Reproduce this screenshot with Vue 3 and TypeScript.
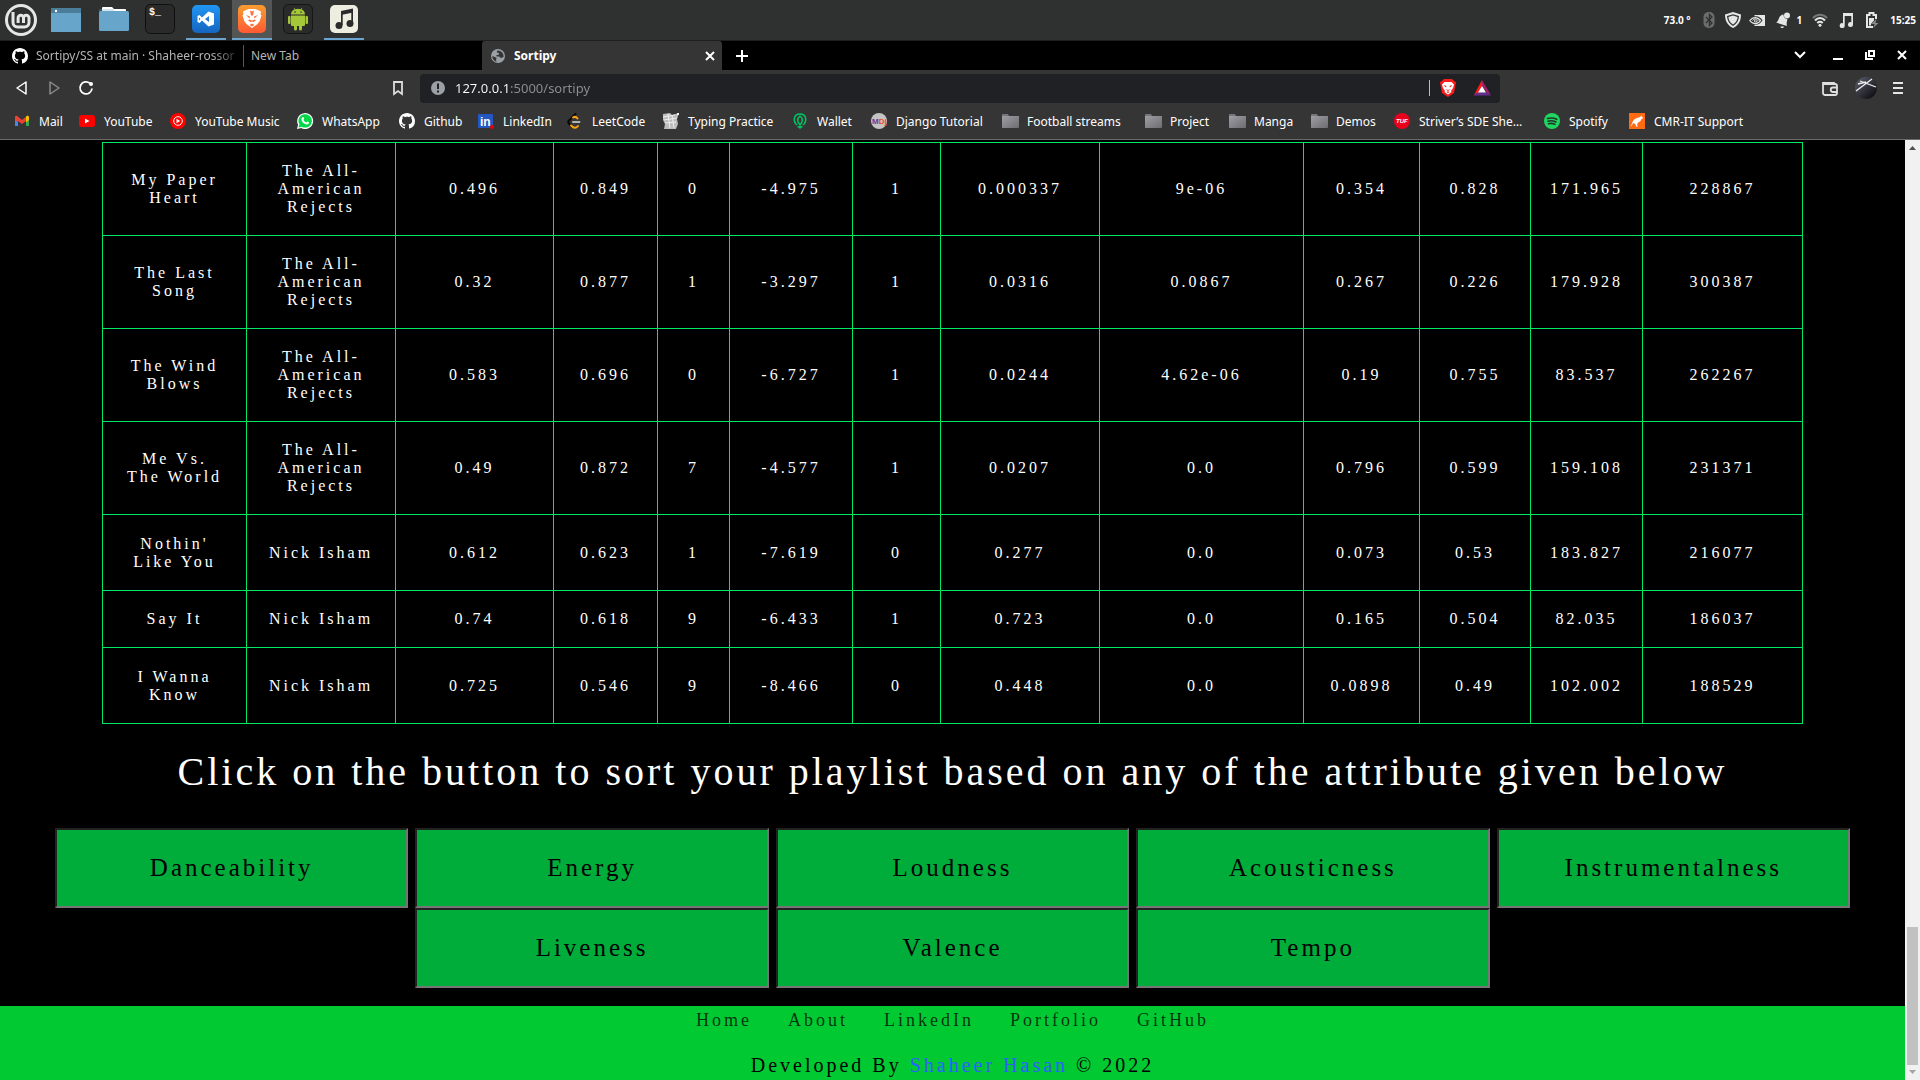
<script setup lang="ts">
import { ref } from 'vue'

interface Launcher {
  name: string
  icon: string
  running?: boolean
  active?: boolean
}

interface Bookmark {
  label: string
  icon: string
  width: number
}

const githubMark =
  '<path fill="#fff" d="M8 0C3.58 0 0 3.58 0 8c0 3.54 2.29 6.53 5.47 7.59.4.07.55-.17.55-.38 0-.19-.01-.82-.01-1.49-2.01.37-2.53-.49-2.69-.94-.09-.23-.48-.94-.82-1.13-.28-.15-.68-.52-.01-.53.63-.01 1.08.58 1.23.82.72 1.21 1.87.87 2.33.66.07-.52.28-.87.51-1.07-1.78-.2-3.64-.89-3.64-3.95 0-.87.31-1.59.82-2.15-.08-.2-.36-1.02.08-2.12 0 0 .67-.21 2.2.82.64-.18 1.32-.27 2-.27.68 0 1.36.09 2 .27 1.53-1.04 2.2-.82 2.2-.82.44 1.1.16 1.92.08 2.12.51.56.82 1.27.82 2.15 0 3.07-1.87 3.75-3.65 3.95.29.25.54.73.54 1.48 0 1.07-.01 1.93-.01 2.2 0 .21.15.46.55.38A8.013 8.013 0 0016 8c0-4.42-3.58-8-8-8z"/>'

const folderMark =
  '<path fill="#77757c" d="M0 2a1 1 0 0 1 1-1h5l1 2h9v11a1 1 0 0 1-1 1H1a1 1 0 0 1-1-1z"/><path fill="url(#folder-face)" d="M0 4V3h17v11a1 1 0 0 1-1 1H1a1 1 0 0 1-1-1z"/>'

const places: Launcher[] = [
  {
    name: 'Menu',
    icon: '<circle cx="21" cy="20" r="14.500" fill="none" stroke="#e6e6e6" stroke-width="3"/><path fill="none" stroke="#e6e6e6" stroke-width="3" d="M13 12v10.500a4.500 4.500 0 0 0 4.500 4.500h7a4.500 4.500 0 0 0 4.500-4.500V18a2.700 2.700 0 0 0-5.500 0v5M23.500 18a2.700 2.700 0 0 0-5.400 0v5"/>'
  },
  {
    name: 'Show desktop',
    icon: '<path fill="#68a5cb" d="M5 8h30v24H5z"/><path fill="#4b7c98" d="M5 8h30v5H5z"/><circle cx="10" cy="11" r="1.200" fill="#fff"/>'
  }
]

const launchers: Launcher[] = [
  {
    name: 'Files',
    icon: '<path fill="#fff" d="M8 12V8a1 1 0 0 1 1-1h9l2 2h11a1 1 0 0 1 1 1v3z"/><rect x="5" y="11" width="30" height="20" rx="1.500" fill="#68a5cb"/><path fill="#68a5cb" d="M5 12V9h14l2 2v2z" opacity=".3"/>'
  },
  {
    name: 'Terminal',
    icon: '<rect x="5.500" y="4.500" width="29" height="29" rx="5" fill="#2a2a2a" stroke="#0f0f0f"/><text x="9" y="15" fill="#fff" font-size="10" font-weight="700" font-family="Liberation Mono, monospace">$_</text>'
  },
  {
    name: 'Visual Studio Code',
    running: true,
    icon: '<rect x="6" y="5" width="28" height="28" rx="5" fill="url(#code-bg)"/><path fill="#fff" fill-rule="evenodd" d="M22.500 11.500l5.500 2v11l-5.500 2-6.500-6-2.500 2.500-2-1V16l2-1 2.500 2.500zM23 16l-4 3 4 3zM13 17.500v3l1.500-1.500z"/>'
  },
  {
    name: 'Brave',
    running: true,
    active: true,
    icon: '<rect x="6" y="5" width="28" height="28" rx="5" fill="url(#brave-bg)"/><path fill="#fff" d="M14 10l3-1h6l3 1 3 1.500-.500 2.500 1 1.500-2 6-2.500 3-5 3.500-5-3.500-2.500-3-2-6 1-1.500L11 11.500z"/><path fill="#ff7139" d="M14 15l4 1.500-.500 2zM26 15l-4 1.500.500 2zM16 20.500l1.500-1 2.500 1 2.500-1 1.500 1-2.500 1.500-1.500-.500-1.500.500zM17.500 25l2.500-1.500 2.500 1.500-2.500 1.500zM18 10.500l2 1 2-1-1 5h-2z"/>'
  },
  {
    name: 'Android Studio',
    icon: '<rect x="5.500" y="4.500" width="29" height="29" rx="5" fill="#2a2a2a" stroke="#151515"/><path fill="#a4c639" d="M13 15.500h14V25a1 1 0 0 1-1 1h-2v3a1.500 1.500 0 0 1-3 0v-3h-2v3a1.500 1.500 0 0 1-3 0v-3h-2a1 1 0 0 1-1-1zM13 14.500c0-3 2-4.500 3.600-5l-1-1.500.500-.300 1.200 1.600a8 8 0 0 1 5.400 0l1.200-1.600.500.300-1 1.500c1.600.500 3.600 2 3.600 5z"/><rect x="10" y="16" width="2.500" height="8" rx="1" fill="#a4c639"/><rect x="27.500" y="16" width="2.500" height="8" rx="1" fill="#a4c639"/><circle cx="17" cy="12" r=".8" fill="#2a2a2a"/><circle cx="23" cy="12" r=".8" fill="#2a2a2a"/>'
  },
  {
    name: 'Music',
    running: true,
    icon: '<rect x="6" y="5" width="28" height="28" rx="5" fill="#eeeee0"/><g fill="#2b2b2b"><path d="M17 11l12-2.500v4L17 15z"/><path d="M17 11h1.700v14H17zM27.300 10H29v13h-1.700z"/><circle cx="15" cy="25.500" r="3.500"/><circle cx="26" cy="23.500" r="3.500"/></g>'
  }
]

const systemIcons = [
  { name: 'Bluetooth', icon: '<rect x="2.500" y="0" width="11" height="16" rx="5" fill="#6b6c6b"/><path fill="none" stroke="#2f3130" stroke-width="1.300" d="M5 5l6 6-2.500 2.500v-11L11 5l-6 6"/>' },
  { name: 'Firewall', icon: '<path fill="#e6e6e6" d="M8 0l8 2.500C16 9 13.500 13.500 8 16 2.500 13.500 0 9 0 2.500z"/><path fill="#2f3130" d="M8 2.200l6 1.900c-.200 4.400-2 7.700-6 9.800-4-2.100-5.800-5.400-6-9.800z"/><path fill="#e6e6e6" d="M8 3.600l4.600 1.500c-.200 3.300-1.600 5.700-4.600 7.400-3-1.700-4.400-4.100-4.600-7.400z"/>' },
  { name: 'Graphics', icon: '<path fill="#e6e6e6" d="M5.500 3H16v11H5.500z"/><path fill="#2f3130" d="M5 4.500c4-.8 7 1 8.500 4C11 12 8 13.500 5 12.500z"/><path fill="none" stroke="#e6e6e6" stroke-width="1.200" d="M.8 8.500C4 4.500 8.500 5 11.500 8.500 9 12.500 4 13 .8 8.500z"/><path fill="none" stroke="#e6e6e6" d="M3.500 8.500c1.500-2 4-2 5.500 0-1.500 2-3 2-4 .5 1-1.500 2-1 2.500-.3"/>' }
]

const statusIcons = [
  { name: 'Wi-Fi', icon: '<path fill="none" stroke="#777" stroke-width="2" d="M1 6c4-4.500 10-4.500 14 0"/><path fill="none" stroke="#e6e6e6" stroke-width="2" d="M3 8.500c3-3.300 7-3.300 10 0M5.300 11c1.600-1.600 3.800-1.600 5.400 0"/><circle cx="8" cy="13.300" r="1.500" fill="#e6e6e6"/>' },
  { name: 'Now playing', icon: '<path fill="#e6e6e6" d="M5 1h10v11.500a2.500 2.500 0 1 1-1.700-2.300V4H6.700v9.500A2.500 2.500 0 1 1 5 11.200z"/>' },
  { name: 'Battery', icon: '<path fill="none" stroke="#e6e6e6" stroke-width="2" d="M9 15H3V3h2.500V1h4v2H12v4"/><path fill="#e6e6e6" d="M5 6h5v2.500L7 12v1.500H5z"/><path fill="#8c8c8c" d="M12.500 7L7.500 12h3.300L9 16l5.500-5h-3z"/>' }
]

const bookmarks: Bookmark[] = [
  { label: 'Mail', width: 65, icon: '<path fill="#4285f4" d="M1 4v9h3V7z"/><path fill="#34a853" d="M12 7v6h3V4z"/><path fill="#fbbc04" d="M12 3.500l1.500-1 1.500 1V7l-3 2.500z"/><path fill="#ea4335" d="M1 3.500l1.500-1L8 7l4-3.200V8l-4 3-4-3v1.500L1 7z"/>' },
  { label: 'YouTube', width: 91, icon: '<rect x="0" y="2" width="16" height="12" rx="2.500" fill="#f00"/><path fill="#fff" d="M6 5.500v5L10.500 8z"/>' },
  { label: 'YouTube Music', width: 127, icon: '<circle cx="8" cy="8" r="8" fill="#f00"/><circle cx="8" cy="8" r="4.300" fill="none" stroke="#fff"/><path fill="#fff" d="M6.500 5.800v4.400L10.200 8z"/>' },
  { label: 'WhatsApp', width: 102, icon: '<path fill="#fff" d="M0 16l1.100-4.200A8 8 0 1 1 4.200 15z"/><path fill="#00d84a" d="M1.500 14.500l.900-3.200a6.700 6.700 0 1 1 2.400 2.400z"/><path fill="#fff" d="M5.500 4.200c.6-.4 1 0 1.100.4l.5 1.200c.1.500-.600.900-.600 1.200.7 1.300 1.400 1.900 2.700 2.400.4 0 .7-.9 1.100-.8l1.500.7c.4.300.1 1.300-.4 1.700-1 .8-2.500.500-3.900-.3C5.800 9.700 4.800 8.300 4.500 7c-.2-1.300.3-2.300 1-2.800z"/>' },
  { label: 'Github', width: 79, icon: githubMark },
  { label: 'LinkedIn', width: 89, icon: '<rect x="0" y="1" width="15" height="14" rx="1" fill="#2257c4"/><text x="2" y="13" fill="#fff" font-size="12" font-weight="700" font-family="Liberation Sans, sans-serif">in</text><circle cx="14" cy="14" r="2" fill="#e00"/>' },
  { label: 'LeetCode', width: 96, icon: '<path fill="none" stroke="#070706" stroke-width="2" stroke-linecap="round" d="M8.500 1L2 7.500c-1 1-1 2 0 3L5 14"/><path fill="none" stroke="#ffa116" stroke-width="2" stroke-linecap="round" d="M6 4.500c1.500-1 3-1 4.500 1M4 12.500c3 3 5 3 7 .5"/><path stroke="#b3b3b3" stroke-width="2" stroke-linecap="round" d="M6 9h6.500"/>' },
  { label: 'Typing Practice', width: 129, icon: '<path fill="#bdbdbd" d="M0 1l7-1 2 2 7-2-2 6 1 5-2 5H1l1-5-2-4z"/><path fill="none" stroke="#eee" stroke-width="1" d="M0 4l12-2M1 7l13-2M2 10l11-1M5 1l2 14M9 2l2 13"/><path fill="#f5f5f5" d="M14 0h2v2h-2z"/>' },
  { label: 'Wallet', width: 79, icon: '<g fill="none" stroke="#00c562" stroke-width="1.500"><path d="M5 12C1 9 1 1 8 1s7 8 3 11"/><path d="M8 3c-3 2-3 6 0 9 3-3 3-7 0-9z"/></g><path fill="#00c562" d="M5.500 13h5v1.500h-1L8 16l-1.500-1.500h-1z"/>' },
  { label: 'Django Tutorial', width: 131, icon: '<circle cx="8" cy="8" r="8" fill="#c4c4c4"/><text x="1" y="11" fill="#7030a0" font-size="8" font-weight="700" font-family="Liberation Sans, sans-serif">M<tspan fill="#f04a23">Dj</tspan></text>' },
  { label: 'Football streams', width: 143, icon: folderMark },
  { label: 'Project', width: 84, icon: folderMark },
  { label: 'Manga', width: 82, icon: folderMark },
  { label: 'Demos', width: 83, icon: folderMark },
  { label: 'Striver’s SDE She…', width: 150, icon: '<circle cx="8" cy="8" r="8" fill="#e8001d"/><text x="2" y="10" fill="#fff" font-size="6" font-weight="700" font-style="italic" font-family="Liberation Sans, sans-serif">TUF</text>' },
  { label: 'Spotify', width: 85, icon: '<circle cx="8" cy="8" r="8" fill="#1ed760"/><path fill="none" stroke="#26352b" stroke-linecap="round" stroke-width="1.600" d="M3.500 5.500c3.500-1 6.500-.6 9.300.8M4 8.200c3-.9 5.500-.5 8 .8M4.500 10.700c2.500-.6 4.600-.4 6.500.7"/>' },
  { label: 'CMR-IT Support', width: 120, icon: '<rect width="16" height="16" fill="#ff6a13"/><path fill="#fff" d="M1.500 13.500C3 12 3 8 6 6c2-1.500 3.500-1 5-2l1.500-1.500.500 1.500 1.500 1-2 1c-.500 2-2 3-3.500 3.500L8 12l1 1.500H7L6.500 11 4 10c-.500 1.500-1 3-2.500 3.500z"/>' }
]

const columnWidths = [144, 149, 158, 104, 72, 123, 88, 159, 204, 116, 111, 112, 160]
const totalWidth = columnWidths.reduce((sum, w) => sum + w, 0)

const songs: string[][] = [
  ['My Paper Heart', 'The All-American Rejects', '0.496', '0.849', '0', '-4.975', '1', '0.000337', '9e-06', '0.354', '0.828', '171.965', '228867'],
  ['The Last Song', 'The All-American Rejects', '0.32', '0.877', '1', '-3.297', '1', '0.0316', '0.0867', '0.267', '0.226', '179.928', '300387'],
  ['The Wind Blows', 'The All-American Rejects', '0.583', '0.696', '0', '-6.727', '1', '0.0244', '4.62e-06', '0.19', '0.755', '83.537', '262267'],
  ['Me Vs. The World', 'The All-American Rejects', '0.49', '0.872', '7', '-4.577', '1', '0.0207', '0.0', '0.796', '0.599', '159.108', '231371'],
  ["Nothin' Like You", 'Nick Isham', '0.612', '0.623', '1', '-7.619', '0', '0.277', '0.0', '0.073', '0.53', '183.827', '216077'],
  ['Say It', 'Nick Isham', '0.74', '0.618', '9', '-6.433', '1', '0.723', '0.0', '0.165', '0.504', '82.035', '186037'],
  ['I Wanna Know', 'Nick Isham', '0.725', '0.546', '9', '-8.466', '0', '0.448', '0.0', '0.0898', '0.49', '102.002', '188529']
]

const attributes = ['Danceability', 'Energy', 'Loudness', 'Acousticness', 'Instrumentalness', 'Liveness', 'Valence', 'Tempo']
const footerLinks = ['Home', 'About', 'LinkedIn', 'Portfolio', 'GitHub']

const address = ref('127.0.0.1:5000/sortipy')
</script>

<template>
  <div class="desktop">
    <svg class="defs" width="0" height="0" aria-hidden="true">
      <defs>
        <linearGradient id="folder-face" x1="0" y1="0" x2="1" y2="1">
          <stop offset="0" stop-color="#a09ea6" />
          <stop offset="1" stop-color="#6d6c70" />
        </linearGradient>
        <linearGradient id="code-bg" x1="0" y1="0" x2="0" y2="1">
          <stop offset="0" stop-color="#2196f3" />
          <stop offset="1" stop-color="#1565c0" />
        </linearGradient>
        <linearGradient id="brave-bg" x1="0" y1="0" x2="0" y2="1">
          <stop offset="0" stop-color="#f99d2f" />
          <stop offset="1" stop-color="#ff5a35" />
        </linearGradient>
        <linearGradient id="avatar-bg" x1="0" y1="0" x2="1" y2="1">
          <stop offset="0" stop-color="#5d6270" />
          <stop offset="1" stop-color="#050507" />
        </linearGradient>
      </defs>
    </svg>

    <header class="panel">
      <div class="panel-group">
        <button v-for="item in places" :key="item.name" type="button" class="launcher" :aria-label="item.name">
          <svg width="40" height="40" v-html="item.icon"></svg>
        </button>
      </div>
      <div class="panel-group">
        <button
          v-for="item in launchers"
          :key="item.name"
          type="button"
          class="launcher"
          :class="{ running: item.running, active: item.active }"
          :aria-label="item.name"
        >
          <svg width="40" height="40" v-html="item.icon"></svg>
        </button>
      </div>
      <div class="tray">
        <span class="temperature">73.0 °</span>
        <div class="tray-group tight">
          <svg v-for="item in systemIcons" :key="item.name" width="16" height="16" v-html="item.icon"></svg>
        </div>
        <div class="notice">
          <svg width="16" height="16">
            <path fill="#e6e6e6" d="M1 10.500c3-1 2-5 5-7 1-1 2-1 2.500-.8 0 2.500 1.500 4.300 4 4.500L12 9c-.500 2-.5 3.500 0 5zM5.500 14.500h3.500c-.500 2-3.500 2-3.500 0z" />
            <circle cx="12" cy="3.500" r="3" fill="#e6e6e6" />
          </svg>
          <span>1</span>
        </div>
        <div class="tray-group">
          <svg v-for="item in statusIcons" :key="item.name" width="16" height="16" v-html="item.icon"></svg>
        </div>
        <time>15:25</time>
      </div>
    </header>

    <div class="tab-strip">
      <div class="tab">
        <svg width="16" height="16" v-html="githubMark"></svg>
        <span class="tab-title">Sortipy/SS at main · Shaheer-rossor</span>
      </div>
      <div class="tab blank"><span>New Tab</span></div>
      <div class="tab current">
        <svg width="16" height="16" viewBox="0 0 16 16">
          <circle cx="8" cy="8" r="7" fill="#9aa0a6" />
          <path fill="#353535" d="M8 2.500c-1 .5-1.500 1-1 2 .5.500 1.500 0 2 1s-1 1.500-2 1.500-1 1.500 0 1.500h2c1 0 1 1.500 2 1.500l2.500-1c.5-3-1.500-6-5.500-6.500zM2.200 8L6 9.500c1 .5.500 1.500 0 2l.500 2.200C4 13 2.200 11 2.200 8z" />
        </svg>
        <span class="tab-title">Sortipy</span>
        <button type="button" aria-label="Close tab">
          <svg width="10" height="10"><path stroke="#fff" stroke-width="2" d="M1 1l8 8M9 1L1 9" /></svg>
        </button>
      </div>
      <button type="button" class="new-tab" aria-label="New tab">
        <svg width="12" height="12"><path stroke="#fff" stroke-width="2" d="M6 0v12M0 6h12" /></svg>
      </button>
      <div class="window-controls">
        <button type="button" class="search-tabs" aria-label="Search tabs">
          <svg width="12" height="12"><path fill="none" stroke="#fff" stroke-width="2" d="M1 3l5 5 5-5" /></svg>
        </button>
        <button type="button" aria-label="Minimise">
          <svg width="12" height="12"><path stroke="#fff" stroke-width="2" d="M1 10h10" /></svg>
        </button>
        <button type="button" aria-label="Restore">
          <svg width="12" height="12"><path fill="none" stroke="#fff" stroke-width="2" d="M5 2h5v5H5zM2 3v7h7" /></svg>
        </button>
        <button type="button" aria-label="Close window">
          <svg width="12" height="12"><path stroke="#fff" stroke-width="2" d="M2 2l8 8M10 2l-8 8" /></svg>
        </button>
      </div>
    </div>

    <div class="browser-bars">
      <div class="toolbar">
        <div class="nav-buttons">
          <button type="button" aria-label="Back">
            <svg width="16" height="16"><path fill="none" stroke="#fff" stroke-width="1.500" stroke-linejoin="round" d="M12 2v12L3 8z" /></svg>
          </button>
          <button type="button" aria-label="Forward">
            <svg width="16" height="16"><path fill="none" stroke="#8a8a8a" stroke-width="1.500" stroke-linejoin="round" d="M4 2v12l9-6z" /></svg>
          </button>
          <button type="button" aria-label="Reload">
            <svg width="16" height="16">
              <path fill="none" stroke="#fff" stroke-width="1.800" d="M12 3.400A6 6 0 1 0 14 8.500" />
              <circle cx="13" cy="4" r="2" fill="#fff" />
            </svg>
          </button>
          <button type="button" class="save-page" aria-label="Bookmark this page">
            <svg width="16" height="16"><path fill="none" stroke="#ddd" stroke-width="1.800" d="M4 2h8v12l-4-3-4 3z" /></svg>
          </button>
        </div>
        <div class="address-bar">
          <svg width="16" height="16"><circle cx="8" cy="8" r="7" fill="#9aa0a6" /><path stroke="#202124" stroke-width="2" d="M8 3.500V9M8 10.500v2" /></svg>
          <input v-model="address" type="text" aria-label="Address" spellcheck="false" />
          <i class="divider"></i>
          <button type="button" aria-label="Shields">
            <svg width="18" height="18">
              <path fill="#fb1d1d" d="M5 0h8l2 2 2 1-.500 3-1.500 8-6 4-6-4L1.500 6 1 3l2-1z" />
              <path fill="#fff" d="M5.500 3h7l2.500 2.500-1 3.500-2 3 .500 1L9 15.500 5.500 13l.500-1-2-3-1-3.500z" />
              <path fill="#fb1d1d" d="M4.500 6l3 1-.500 1.500zM13.500 6l-3 1 .500 1.500zM6 10l3 1 3-1-3 2zM7.500 13L9 12.200l1.500.8L9 14z" />
            </svg>
          </button>
          <button type="button" aria-label="Rewards">
            <svg width="18" height="18">
              <path fill="#ff1a1a" d="M9 1v6L5 14l-4 2z" />
              <path fill="#9e1f63" d="M9 1l9 15-4-2-5-7z" />
              <path fill="#662d91" d="M0 16.500L5 13.500h9l4 3z" />
              <path fill="#fff" d="M9 7l4 6.500H5z" />
            </svg>
          </button>
        </div>
        <div class="browser-actions">
          <button type="button" aria-label="Wallet">
            <svg width="18" height="18"><path fill="none" stroke="#e0e0e0" stroke-width="1.800" d="M2 5V4h11v2M2 5h12a2 2 0 0 1 2 2v7a2 2 0 0 1-2 2H4a2 2 0 0 1-2-2zM16 8.500h-4a2 2 0 0 0 0 4.500h4" /></svg>
          </button>
          <button type="button" aria-label="Profile">
            <svg width="22" height="22">
              <circle cx="11" cy="11" r="11" fill="url(#avatar-bg)" />
              <path stroke="#eee" stroke-width="1.300" d="M1 14L17 2M5 4l16 6M3 7l8-2" />
            </svg>
          </button>
          <button type="button" aria-label="Main menu">
            <svg width="10" height="14"><path stroke="#e6e6e6" stroke-width="2" d="M0 2h10M0 7h10M0 12h10" /></svg>
          </button>
        </div>
      </div>
      <nav class="bookmarks" aria-label="Bookmarks">
        <a v-for="mark in bookmarks" :key="mark.label" href="#" :style="{ width: mark.width + 'px' }">
          <svg width="17" height="16" v-html="mark.icon"></svg>
          <span>{{ mark.label }}</span>
        </a>
      </nav>
    </div>

    <div class="viewport">
      <div class="page">
        <main>
          <table>
            <colgroup>
              <col v-for="(w, i) in columnWidths" :key="i" :style="{ width: (w / totalWidth) * 100 + '%' }" />
            </colgroup>
            <tbody>
              <tr v-for="song in songs" :key="song[0]" :class="{ compact: song[0] === 'Say It' }">
                <td v-for="(value, i) in song" :key="i">{{ value }}</td>
              </tr>
            </tbody>
          </table>
          <h1>Click on the button to sort your playlist based on any of the attribute given below</h1>
          <div class="sort-buttons">
            <button v-for="name in attributes" :key="name" type="button">{{ name }}</button>
          </div>
        </main>
        <footer>
          <nav class="footer-links" aria-label="Footer">
            <a v-for="name in footerLinks" :key="name" href="#">{{ name }}</a>
          </nav>
          <p>Developed By <a href="#">Shaheer Hasan</a> © 2022</p>
        </footer>
      </div>
      <div class="scrollbar" aria-hidden="true">
        <svg width="15" height="15"><path fill="#505050" d="M4 10h7L7.500 6z" /></svg>
        <div class="thumb"></div>
        <svg width="15" height="15"><path fill="#a3a3a3" d="M4 5h7L7.500 9z" /></svg>
      </div>
    </div>
  </div>
</template>

<style>
body {
  margin: 0;
  background: #000;
}
</style>

<style scoped>
.desktop {
  display: flex;
  flex-direction: column;
  min-height: 100vh;
  font-family: "Noto Sans", sans-serif;
  font-size: 12px;
  color: #fff;
}

.desktop * {
  box-sizing: border-box;
}

.defs {
  position: absolute;
}

svg {
  display: block;
  flex: none;
}

button {
  display: flex;
  align-items: center;
  justify-content: center;
  flex: none;
  margin: 0;
  padding: 0;
  border: 0;
  background: none;
  font: inherit;
  color: inherit;
}

/* Desktop panel */
.panel {
  display: flex;
  align-items: center;
  gap: 8px;
  height: 41px;
  background: #2f3130;
  border-bottom: 1px solid #1d1e1e;
}

.panel-group {
  display: flex;
  gap: 6px;
}

.launcher {
  width: 40px;
  height: 40px;
  position: relative;
}

.launcher.active {
  background: #545555;
}

.launcher.running::after {
  content: "";
  position: absolute;
  left: 0;
  right: 0;
  bottom: 0;
  height: 2px;
  background: #6aa6cf;
}

.tray {
  display: flex;
  align-items: center;
  gap: 10px;
  margin-left: auto;
  padding-right: 4px;
  font-size: 10px;
  font-weight: 700;
}

.tray-group {
  display: flex;
  gap: 10px;
}

.tray-group.tight {
  gap: 8px;
}

.notice {
  display: flex;
  align-items: center;
  gap: 6px;
}

/* Tabs */
.tab-strip {
  display: flex;
  align-items: center;
  height: 29px;
  background: #000;
}

.tab {
  display: flex;
  align-items: center;
  gap: 8px;
  width: 243px;
  height: 29px;
  padding: 0 0 0 12px;
  color: #b4b4b4;
  white-space: nowrap;
}

.tab-title {
  flex: 1;
}

.tab:first-child .tab-title {
  mask-image: linear-gradient(to right, #000 85%, transparent);
}

.tab.blank {
  width: 239px;
  height: 22px;
  padding: 0 7px;
  border-left: 1px solid #5a5a5a;
}

.tab.current {
  width: 240px;
  padding: 0 7px 0 8px;
  border-radius: 3px 3px 0 0;
  background: #353535;
  color: #fff;
  font-weight: 700;
}

.new-tab {
  width: 40px;
  height: 28px;
}

.window-controls {
  display: flex;
  gap: 20px;
  margin-left: auto;
  padding: 0 12px 2px 0;
}

.search-tabs {
  margin-right: 6px;
}

/* Toolbar and bookmarks */
.browser-bars {
  background: #353535;
  border-bottom: 1px solid #6b6b6b;
}

.toolbar {
  display: flex;
  align-items: center;
  padding-top: 4px;
}

.nav-buttons {
  display: flex;
  align-items: center;
  gap: 16px;
  width: 420px;
  padding: 0 14px 2px;
}

.save-page {
  margin-left: auto;
}

.address-bar {
  display: flex;
  flex: 1;
  align-items: center;
  gap: 9px;
  height: 29px;
  padding: 0 9px 2px 10px;
  border-radius: 4px;
  background: #202124;
}

.address-bar input {
  flex: 1;
  min-width: 0;
  padding: 0;
  border: 0;
  outline: 0;
  font: 13px "Noto Sans", sans-serif;
  color: transparent;
  background: linear-gradient(to right, #fff 55px, #8e8f92 55px);
  background-clip: text;
}

.divider {
  width: 1px;
  height: 16px;
  background: #bbb;
}

.address-bar button {
  margin-right: 7px;
}

.address-bar button:last-child {
  margin-right: 0;
}

.browser-actions {
  display: flex;
  align-items: center;
  justify-content: flex-end;
  gap: 16px;
  width: 420px;
  padding: 0 17px 2px 0;
}

.bookmarks {
  display: flex;
  align-items: center;
  height: 36px;
  padding-left: 14px;
}

.bookmarks a {
  display: flex;
  flex: none;
  align-items: center;
  gap: 8px;
  color: #fff;
  text-decoration: none;
  white-space: nowrap;
}

/* Web page */
.viewport {
  display: flex;
  flex: 1;
}

.page {
  display: flex;
  flex: 1;
  flex-direction: column;
  background: #000;
  font-family: "Liberation Serif", serif;
  letter-spacing: 3px;
  text-align: center;
}

main {
  padding: 2px 55px 18px;
}

table {
  width: calc(100% - 94px);
  margin: 0 47px;
  border-collapse: collapse;
  table-layout: fixed;
  font-size: 16px;
  line-height: 18px;
}

tr {
  height: 76px;
}

tr.compact {
  height: 57px;
}

td {
  padding: 19px;
  border: 1px solid #00e766;
}

h1 {
  margin: 25px 0 33px;
  font-size: 40px;
  font-weight: 400;
  line-height: 46px;
}

.sort-buttons {
  display: flex;
  flex-wrap: wrap;
  justify-content: center;
  column-gap: 7px;
}

.sort-buttons button {
  width: calc((100% - 28px) / 5);
  height: 80px;
  border: 2px solid;
  border-color: #222 #767676 #767676 #222;
  background: #00ad3a;
  color: #000;
  font-size: 25px;
  letter-spacing: 3px;
}

footer {
  flex: 1;
  padding-top: 4px;
  background: #00c932;
  color: #000;
}

.footer-links {
  display: flex;
  justify-content: center;
  gap: 36px;
  font-size: 18px;
  line-height: 20px;
}

.footer-links a {
  color: rgba(0, 0, 0, 0.75);
  text-decoration: none;
}

footer p {
  margin: 24px 0 0;
  font-size: 20px;
  line-height: 22px;
}

footer p a {
  color: #2962ff;
  text-decoration: none;
}

.scrollbar {
  display: flex;
  flex-direction: column;
  width: 15px;
  background: #f1f1f1;
}

.thumb {
  width: 11px;
  height: 138px;
  margin: auto 2px 0;
  background: #c1c1c1;
}
</style>
